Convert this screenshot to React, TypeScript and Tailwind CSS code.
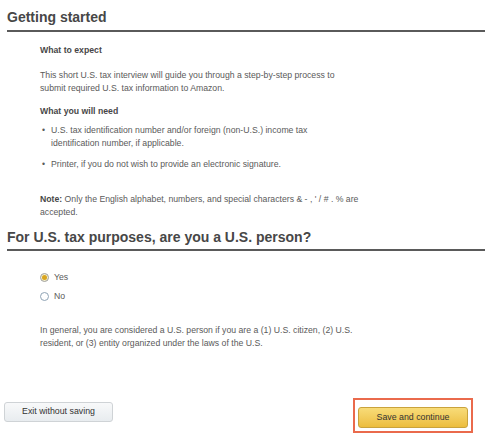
export default function App() {
  return (
    <div className="w-[485px] h-[445px] bg-white text-[#5a5a5a] font-['Liberation_Sans',Arial,sans-serif] overflow-hidden">
      <div className="pl-[7px] pt-[8px]">
        <h1 className="text-[14px] leading-[18px] font-bold text-[#474747]">Getting started</h1>
        <div className="mt-[4px] h-[2px] bg-[#5a5a5a]" />
      </div>

      <div className="pl-[40px] pr-[40px] text-[8.7px] leading-[13px]">
        <h2 className="mt-[12px] font-bold text-[#474747]">What to expect</h2>
        <p className="mt-[12px]">
          This short U.S. tax interview will guide you through a step-by-step process to
          <br />
          submit required U.S. tax information to Amazon.
        </p>
        <h2 className="mt-[10px] font-bold text-[#474747]">What you will need</h2>
        <ul className="mt-[6px] flex flex-col gap-[8px]">
          <li className="flex gap-[6px] pl-[2px]">
            <span>•</span>
            <span>
              U.S. tax identification number and/or foreign (non-U.S.) income tax
              <br />
              identification number, if applicable.
            </span>
          </li>
          <li className="flex gap-[6px] pl-[2px]">
            <span>•</span>
            <span>Printer, if you do not wish to provide an electronic signature.</span>
          </li>
        </ul>
        <p className="mt-[22px]">
          <span className="font-bold text-[#474747]">Note:</span> Only the English alphabet, numbers, and
          special characters &amp; - , ' / # . % are
          <br />
          accepted.
        </p>
      </div>

      <div className="pl-[7px] mt-[9px]">
        <h1 className="text-[14px] leading-[18px] font-bold text-[#474747]">
          For U.S. tax purposes, are you a U.S. person?
        </h1>
        <div className="mt-[3px] h-[2px] bg-[#5a5a5a]" />
      </div>

      <div className="pl-[40px] pr-[40px] text-[8.7px] leading-[13px]">
        <div className="mt-[20px] flex flex-col gap-[6px]">
          <label className="flex items-center gap-[5px]">
            <span className="w-[9px] h-[9px] rounded-full border border-[#a0a0a0] bg-[#f6f0cc] flex items-center justify-center">
              <span className="w-[5px] h-[5px] rounded-full bg-[#d9a520]" />
            </span>
            Yes
          </label>
          <label className="flex items-center gap-[5px]">
            <span className="w-[9px] h-[9px] rounded-full border border-[#8fa3b5] bg-white" />
            No
          </label>
        </div>
        <p className="mt-[21px]">
          In general, you are considered a U.S. person if you are a (1) U.S. citizen, (2) U.S.
          <br />
          resident, or (3) entity organized under the laws of the U.S.
        </p>
      </div>

      <div className="mt-[48px] pl-[4px] pr-[12px] flex items-start justify-between">
        <button className="mt-[4px] w-[109px] h-[20px] rounded-[3px] border border-[#cfd3d6] bg-gradient-to-b from-[#f8f9fa] to-[#e8ecef] text-[8.8px] text-[#333]">
          Exit without saving
        </button>
        <div className="border-2 border-[#ea6a4c] p-[3px]">
          <button className="w-[110px] h-[21px] rounded-[3px] border border-[#c9a33c] bg-gradient-to-b from-[#f8dc78] to-[#ecbd3c] text-[8.8px] text-[#333]">
            Save and continue
          </button>
        </div>
      </div>
    </div>
  )
}
